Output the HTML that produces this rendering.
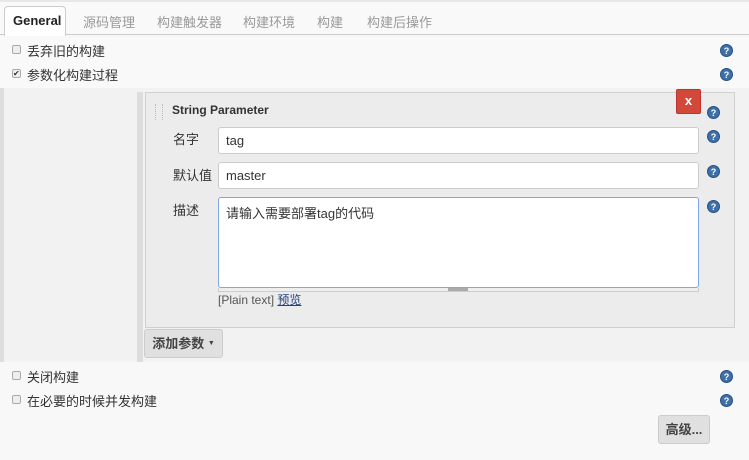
<!DOCTYPE html>
<html><head><meta charset="utf-8"><style>
*{box-sizing:border-box;margin:0;padding:0}
body{width:749px;height:460px;background:#f8f8f8;font-family:"Liberation Sans","Noto Sans CJK SC",sans-serif;font-size:13px;color:#333;position:relative;overflow:hidden}
.a{position:absolute}
.tab{position:absolute;top:12px;color:#999;font-size:13px}
.cb{position:absolute;width:9px;height:9px;border:1px solid #aaa;background:#eee;border-radius:2px}
.h{position:absolute;width:13px;height:13px;border-radius:50%;background:#3d6fa8;border:1px solid #2a5080;color:#fff;font-size:9px;font-weight:bold;text-align:center;line-height:12px}
.inp{position:absolute;left:218px;width:481px;height:27px;background:#fff;border:1px solid #ccc;border-radius:3px;padding:5px 7px;font-size:13px}
.btn{position:absolute;background:#e0e0e0;border:1px solid #ccc;border-radius:3px;font-weight:bold;color:#444;display:flex;align-items:center;justify-content:center;line-height:1}
</style></head><body>
<div class="a" style="left:0;top:0;width:749px;height:35px;background:#f9f9f9;border-bottom:1px solid #ccc;border-top:2px solid #e8e8e8"></div>
<div class="a" style="left:4px;top:6px;width:62px;height:30px;background:#fff;border:1px solid #ccc;border-bottom:none;border-radius:4px 4px 0 0;font-weight:bold;color:#222;padding:6px 0 0 8px">General</div>
<div class="tab" style="left:83px">源码管理</div>
<div class="tab" style="left:157px">构建触发器</div>
<div class="tab" style="left:243px">构建环境</div>
<div class="tab" style="left:317px">构建</div>
<div class="tab" style="left:367px">构建后操作</div>
<div class="a" style="left:0;top:38px;width:749px;height:50px;background:#f9f9f9"></div>
<div class="cb" style="left:12px;top:45px"></div><div class="a" style="left:27px;top:41px">丢弃旧的构建</div>
<div class="cb" style="left:12px;top:69px;font-size:8px;line-height:7px;color:#333">✔</div><div class="a" style="left:27px;top:65px">参数化构建过程</div>
<div class="h" style="left:720px;top:44px">?</div><div class="h" style="left:720px;top:68px">?</div>
<div class="a" style="left:0;top:88px;width:749px;height:274px;background:#f2f2f2;border-left:4px solid #ddd"></div>
<div class="a" style="left:137px;top:92px;width:6px;height:270px;background:#ddd"></div>
<div class="a" style="left:145px;top:92px;width:590px;height:236px;background:#ececec;border:1px solid #d0d0d0"></div>
<div class="a" style="left:155px;top:104px;width:8px;height:16px;border-left:1px dotted #bbb;border-right:1px dotted #bbb"></div>
<div class="a" style="left:172px;top:103px;font-weight:bold;font-size:12px;color:#333">String Parameter</div>
<div class="a" style="left:676px;top:89px;width:25px;height:25px;background:#d24939;border:1px solid #b33;border-radius:2px;color:#fff;font-weight:bold;text-align:center;line-height:22px">x</div>
<div class="h" style="left:707px;top:106px">?</div>
<div class="a" style="left:173px;top:129px">名字</div>
<div class="inp" style="top:127px">tag</div><div class="h" style="left:707px;top:130px">?</div>
<div class="a" style="left:173px;top:165px">默认值</div>
<div class="inp" style="top:162px">master</div><div class="h" style="left:707px;top:165px">?</div>
<div class="a" style="left:173px;top:200px">描述</div>
<div class="inp" style="top:197px;height:91px;border:1px solid #7fa6e6">请输入需要部署tag的代码</div><div class="h" style="left:707px;top:200px">?</div>
<div class="a" style="left:218px;top:288px;width:481px;height:4px;border:1px solid #ccc;border-top:none;background:#eee"></div>
<div class="a" style="left:448px;top:288px;width:20px;height:3px;background:#aaa"></div>
<div class="a" style="left:218px;top:291px;font-size:12px;color:#555">[Plain text] <span style="color:#204080;text-decoration:underline">预览</span></div>
<div class="btn" style="left:144px;top:329px;width:79px;height:29px">添加参数&nbsp;<span style="font-size:7px">▼</span></div>
<div class="cb" style="left:12px;top:371px"></div><div class="a" style="left:27px;top:367px">关闭构建</div>
<div class="cb" style="left:12px;top:395px"></div><div class="a" style="left:27px;top:391px">在必要的时候并发构建</div>
<div class="h" style="left:720px;top:370px">?</div><div class="h" style="left:720px;top:394px">?</div>
<div class="btn" style="left:658px;top:415px;width:52px;height:29px">高级...</div>
</body></html>
